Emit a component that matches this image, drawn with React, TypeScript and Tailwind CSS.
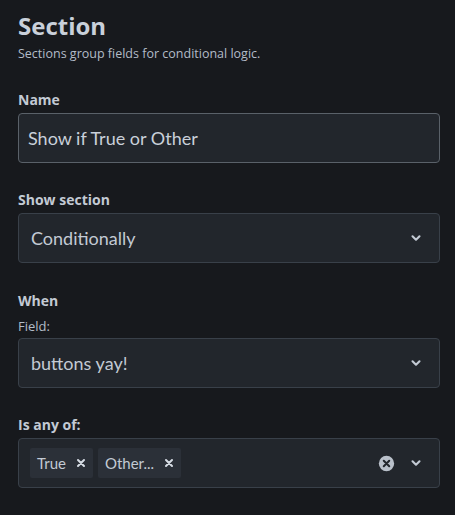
import React from 'react';

function Chevron() {
  return (
    <svg width="14" height="14" viewBox="0 0 20 20" className="text-[#c3cad4]">
      <path d="M5 7.5l5 5 5-5" fill="none" stroke="currentColor" strokeWidth="3" strokeLinecap="round" strokeLinejoin="round" />
    </svg>
  );
}

function ClearIcon() {
  return (
    <svg width="17" height="17" viewBox="0 0 20 20">
      <circle cx="10" cy="10" r="9" fill="#b9c0ca" />
      <path d="M6.8 6.8l6.4 6.4M13.2 6.8l-6.4 6.4" stroke="#22262c" strokeWidth="2.4" strokeLinecap="round" />
    </svg>
  );
}

function Chip({ label }: { label: string }) {
  return (
    <div className="flex items-center h-[30px] pl-[7px] pr-[7px] bg-[#2b3038] rounded-[2px] text-[15px] text-[#c3cad4] [font-family:Lato,sans-serif]">
      <span>{label}</span>
      <svg width="10" height="10" viewBox="0 0 10 10" className="ml-[10px]">
        <path d="M2 2l6 6M8 2l-6 6" stroke="#d6dce4" strokeWidth="2" strokeLinecap="round" />
      </svg>
    </div>
  );
}

function Label({ children }: { children: React.ReactNode }) {
  return <div className="text-[14px] font-bold text-[#c3cad4] leading-[20px] mb-[3px]">{children}</div>;
}

function Select({ value }: { value: string }) {
  return (
    <div className="flex items-center h-[50px] pl-[12px] pr-[16px] bg-[#22262c] border border-[#394049] rounded-[4px]">
      <span className="flex-1 text-[18px] text-[#c3cad4] [font-family:Lato,sans-serif]">{value}</span>
      <Chevron />
    </div>
  );
}

export default function App() {
  return (
    <div className="w-[455px] h-[515px] bg-[#17191d] pl-[18px] pr-[15px] pt-[10px] [font-family:'Open_Sans','Noto_Sans',sans-serif]">
      <h1 className="text-[24px] font-bold text-[#c9d0da] leading-[32px]">Section</h1>
      <p className="text-[12.5px] text-[#b3bcc8] leading-[16px] mt-[4px]">Sections group fields for conditional logic.</p>

      <div className="mt-[28px]">
        <Label>Name</Label>
        <div className="flex items-center h-[50px] px-[9px] bg-[#22262c] border border-[#5a6169] rounded-[4px]">
          <span className="text-[18px] text-[#c9d0da] [font-family:Lato,sans-serif]">Show if True or Other</span>
        </div>
      </div>

      <div className="mt-[27px]">
        <Label>Show section</Label>
        <Select value="Conditionally" />
      </div>

      <div className="mt-[28px]">
        <Label>When</Label>
        <div className="text-[13px] text-[#b3bcc8] leading-[18px] mt-[6px] mb-[3px]">Field:</div>
        <Select value="buttons yay!" />
      </div>

      <div className="mt-[27px]">
        <Label>Is any of:</Label>
        <div className="flex items-center h-[50px] pl-[11px] pr-[16px] bg-[#22262c] border border-[#394049] rounded-[4px]">
          <div className="flex-1 flex gap-[5px]">
            <Chip label="True" />
            <Chip label="Other..." />
          </div>
          <ClearIcon />
          <div className="ml-[14px]">
            <Chevron />
          </div>
        </div>
      </div>
    </div>
  );
}
